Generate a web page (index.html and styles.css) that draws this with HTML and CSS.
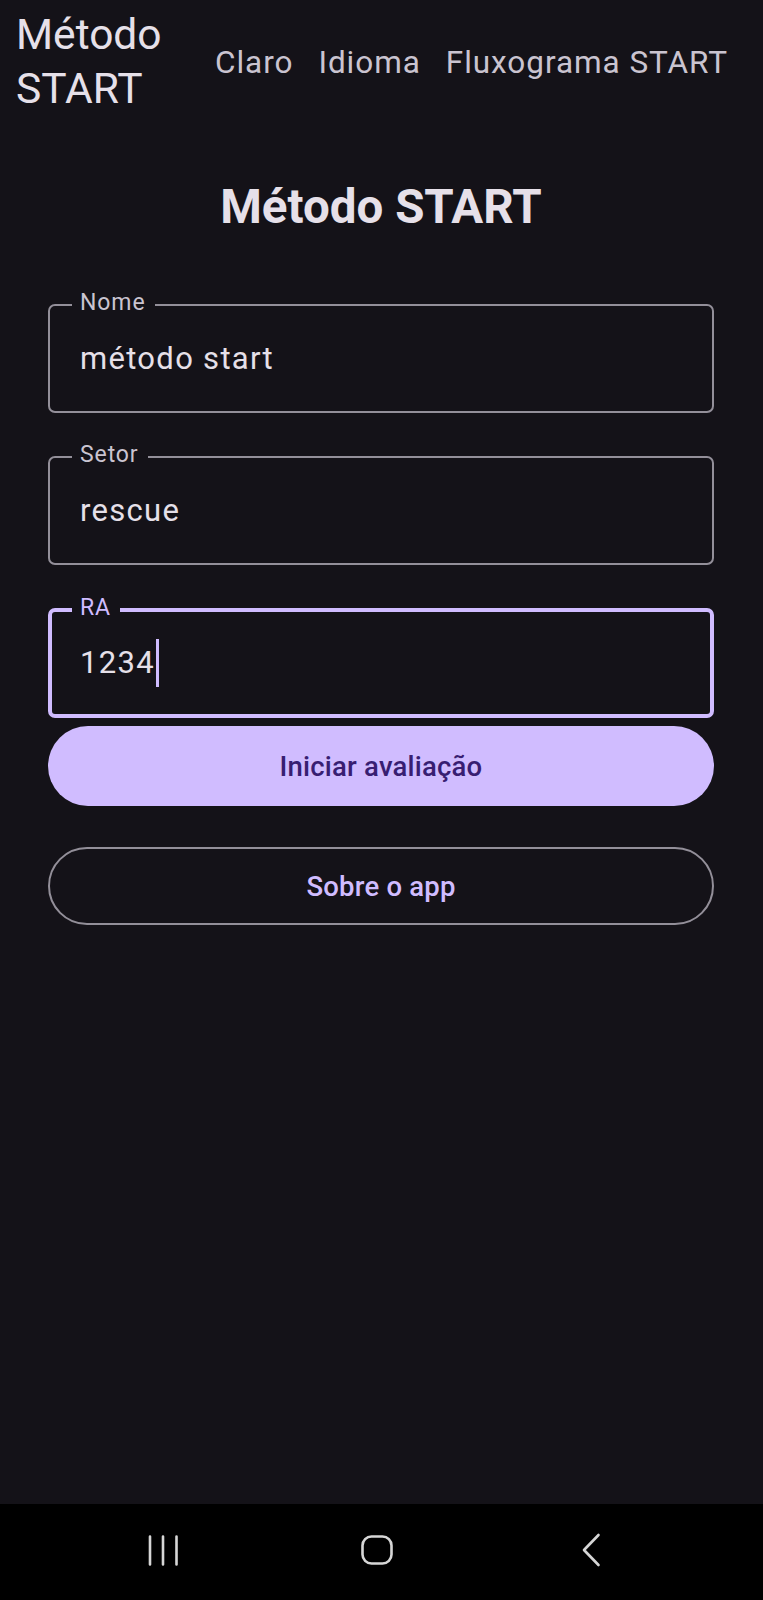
FILE: index.html
```html
<!DOCTYPE html>
<html lang="pt-BR">
<head>
<meta charset="utf-8">
<title>Método START</title>
<link rel="stylesheet" href="styles.css">
</head>
<body>
<div class="screen">
  <header class="topbar">
    <div class="app-title">Método START</div>
    <nav class="actions">
      <span class="action">Claro</span>
      <span class="action">Idioma</span>
      <span class="action">Fluxograma START</span>
    </nav>
  </header>

  <main class="content">
    <h1 class="page-title">Método START</h1>
    <form class="form">
      <div class="field">
        <span class="field-label">Nome</span>
        <span class="field-value">método start</span>
      </div>
      <div class="field">
        <span class="field-label">Setor</span>
        <span class="field-value">rescue</span>
      </div>
      <div class="field field-focused">
        <span class="field-label">RA</span>
        <span class="field-value">1234</span>
        <span class="caret"></span>
      </div>
      <button type="button" class="btn btn-filled">Iniciar avaliação</button>
      <button type="button" class="btn btn-outlined">Sobre o app</button>
    </form>
  </main>

  <footer class="navbar">
    <div class="nav-slot">
      <svg width="32" height="32" viewBox="0 0 32 32" aria-hidden="true">
        <path d="M3 2.5v28M16 2.5v28M29.5 2.5v28" stroke="#d6d6d6" stroke-width="2.6" stroke-linecap="round" fill="none"/>
      </svg>
    </div>
    <div class="nav-slot">
      <svg width="34" height="32" viewBox="0 0 34 32" aria-hidden="true">
        <rect x="2.5" y="2.5" width="29" height="27" rx="9" ry="9" stroke="#d6d6d6" stroke-width="2.6" fill="none"/>
      </svg>
    </div>
    <div class="nav-slot">
      <svg width="22" height="34" viewBox="0 0 22 34" aria-hidden="true">
        <path d="M18.5 2L4 17l14.5 15" stroke="#d6d6d6" stroke-width="2.6" stroke-linecap="round" stroke-linejoin="round" fill="none"/>
      </svg>
    </div>
  </footer>
</div>
</body>
</html>
```

FILE: styles.css
```css
* {
  box-sizing: border-box;
}

html, body {
  margin: 0;
  padding: 0;
  background: #141218;
}

body {
  font-family: Roboto, "Liberation Sans", sans-serif;
  color: #e6e0e9;
}

.screen {
  width: 763px;
  height: 1600px;
  display: flex;
  flex-direction: column;
  background: #141218;
}

/* Top app bar */
.topbar {
  display: flex;
  align-items: center;
  padding: 8px 0 0 16px;
}

.app-title {
  width: 199px;
  flex: 0 0 auto;
  font-size: 42.5px;
  line-height: 54px;
  font-weight: 400;
  color: #e6e0e9;
}

.actions {
  display: flex;
  gap: 25px;
  margin-top: 1px;
}

.action {
  font-size: 31.5px;
  line-height: 40px;
  letter-spacing: 0.95px;
  color: #cac4d0;
  white-space: nowrap;
}

/* Content */
.content {
  flex: 1;
  padding: 0 49px 0 48px;
}

.page-title {
  margin: 63px 0 0;
  text-align: center;
  font-size: 47.5px;
  line-height: 56px;
  font-weight: 700;
  color: #e6e0e9;
}

.form {
  display: flex;
  flex-direction: column;
  margin-top: 69px;
}

.field {
  position: relative;
  height: 109px;
  border: 2px solid #938f99;
  border-radius: 7px;
  display: flex;
  align-items: center;
  padding-left: 30px;
  margin-bottom: 43px;
}

.field-label {
  position: absolute;
  top: -16px;
  left: 22px;
  padding: 0 9px 0 8px;
  background: #141218;
  font-size: 23px;
  line-height: 26px;
  letter-spacing: 0.9px;
  color: #cac4d0;
}

.field-value {
  font-size: 31px;
  line-height: 44px;
  letter-spacing: 1.3px;
  color: #e6e0e9;
}

.field-focused {
  height: 110px;
  border: 4px solid #d0bcff;
  padding-left: 28px;
  margin-bottom: 8px;
}

.field-focused .field-label {
  left: 20px;
  top: -17px;
  color: #d0bcff;
}

.caret {
  width: 3px;
  height: 48px;
  margin-left: 1px;
  background: #d0bcff;
}

.btn {
  display: block;
  width: 100%;
  border-radius: 40px;
  font-family: Roboto, "Liberation Sans", sans-serif;
  font-size: 27.5px;
  font-weight: 500;
  letter-spacing: 0.2px;
  cursor: pointer;
  padding: 0;
}

.btn-filled {
  height: 80px;
  border: none;
  background: #d0bcff;
  color: #381e72;
}

.btn-outlined {
  height: 78px;
  margin-top: 41px;
  border: 2px solid #938f99;
  background: transparent;
  color: #d0bcff;
}

/* System navigation bar */
.navbar {
  height: 96px;
  background: #000;
  display: flex;
  align-items: center;
  padding-left: 56px;
  padding-bottom: 4px;
}

.nav-slot {
  width: 214px;
  display: flex;
  justify-content: center;
  align-items: center;
}
```
